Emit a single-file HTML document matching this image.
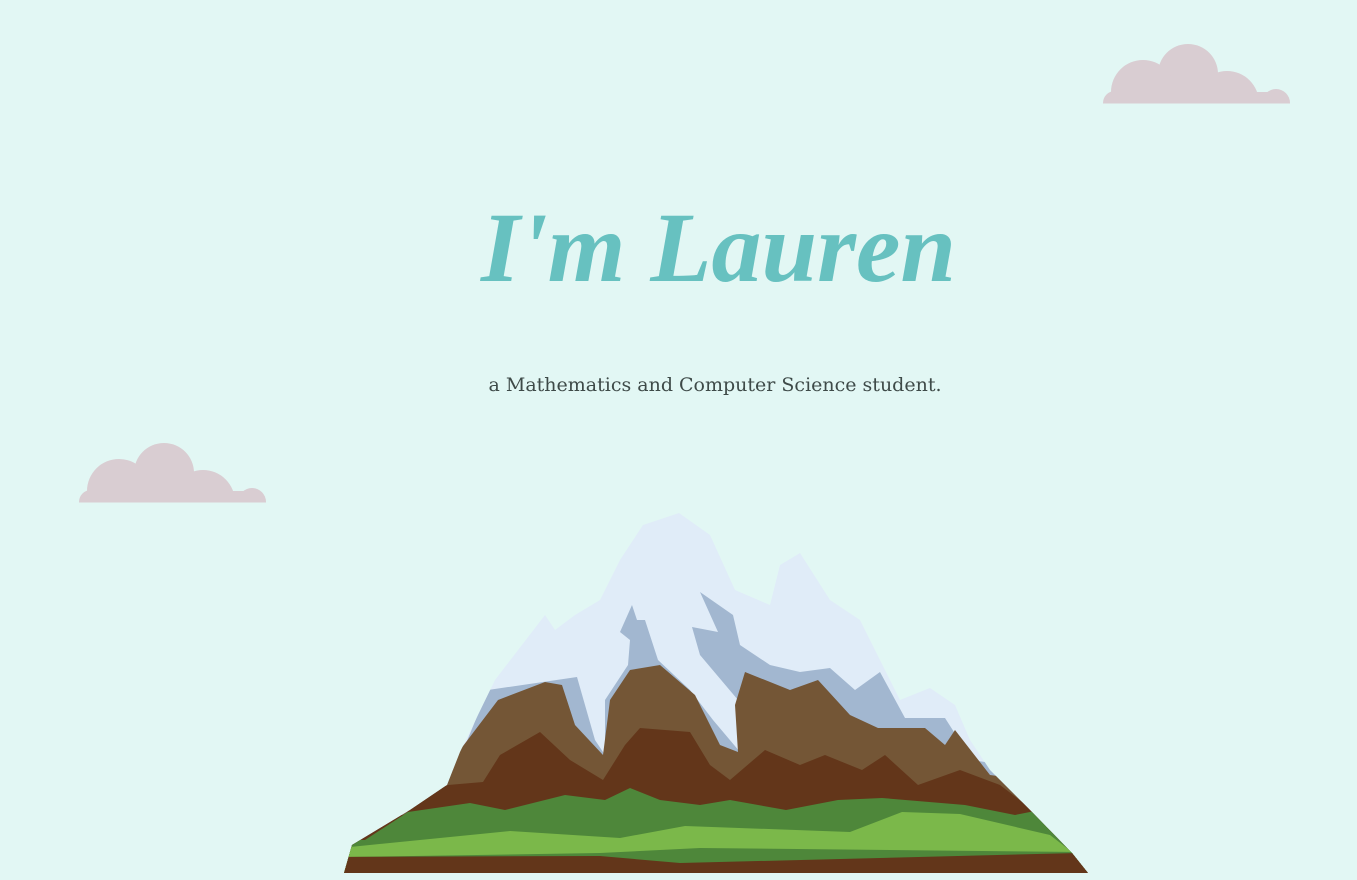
<!DOCTYPE html>
<html><head><meta charset="utf-8"><style>
html,body{margin:0;padding:0}
body{width:1357px;height:880px;background:#e2f7f4;position:relative;overflow:hidden}
h1{position:absolute;left:0;width:1437px;top:190px;margin:0;text-align:center;font-family:"Liberation Serif",serif;font-style:italic;font-weight:bold;font-size:100px;color:#67c1c0}
p{position:absolute;left:0;width:1430px;top:374px;margin:0;text-align:center;font-family:"DejaVu Serif",serif;font-size:19px;color:#3e4a48}
svg{position:absolute;left:0;top:0}
</style></head><body>
<svg width="1357" height="880">
<defs>
<g id="cloud" fill="#d9cdd2">
<circle cx="1188" cy="74" r="30"/><circle cx="1143" cy="92" r="32"/><circle cx="1227" cy="103" r="32"/><circle cx="1276" cy="103" r="14"/><circle cx="1115" cy="103" r="12"/><rect x="1143" y="92" width="125" height="12"/>
</g>
<clipPath id="c1"><rect x="1000" y="0" width="357" height="103.5"/></clipPath>
<clipPath id="m"><polygon points="344,873 352,845 410,810 447,785 460,752 495,680 545,615 555,630 575,615 600,600 620,560 643,525 679,513 710,535 735,590 770,605 780,565 800,553 830,600 860,620 900,700 930,688 955,705 970,740 990,770 1030,810 1072,853 1088,873"/></clipPath>
</defs>
<g clip-path="url(#c1)"><use href="#cloud"/></g>
<g clip-path="url(#c1)" transform="translate(-1024,399)"><use href="#cloud"/></g>
<g clip-path="url(#m)">
<rect x="300" y="500" width="800" height="380" fill="#e0ecf8"/>
<polygon fill="#a2b7d0" points="300,900 300,770 455,770 488,690 577,677 595,740 605,755 605,700 628,665 630,640 620,632 632,605 637,620 645,620 658,660 690,690 713,720 740,752 738,700 700,655 692,627 718,632 700,592 733,615 740,645 770,665 800,672 830,668 855,690 880,672 905,718 945,718 972,760 1100,780 1100,900"/>
<polygon fill="#745636" points="300,900 300,785 447,785 460,750 498,700 545,682 562,685 575,725 603,755 610,700 630,670 660,665 695,695 720,745 738,752 735,705 745,672 790,690 818,680 850,715 878,728 925,728 945,745 955,730 990,775 1100,790 1100,900"/>
<polygon fill="#63361a" points="300,900 300,815 405,815 420,795 448,785 483,782 500,755 540,732 570,760 603,780 625,745 640,728 690,732 710,765 730,780 765,750 800,765 825,755 862,770 885,755 918,785 960,770 1000,785 1030,808 1100,810 1100,900"/>
<polygon fill="#4e873a" points="300,900 300,840 365,840 408,812 470,803 505,810 565,795 605,800 630,788 660,800 700,805 730,800 786,810 838,800 882,798 965,805 1015,815 1040,810 1055,830 1100,840 1100,900"/>
<polygon fill="#7bb84a" points="300,900 300,848 350,847 510,831 620,838 685,826 850,832 902,812 960,814 1050,835 1072,852 1100,900"/>
<polygon fill="#4e873a" points="350,857 600,853 700,848 1080,852 1080,860 700,864 350,860"/>
<polygon fill="#63361a" points="300,880 300,857 600,856 680,863 1078,853 1100,880"/>
</g>
</svg>
<h1>I'm Lauren</h1>
<p>a Mathematics and Computer Science student.</p>
</body></html>
